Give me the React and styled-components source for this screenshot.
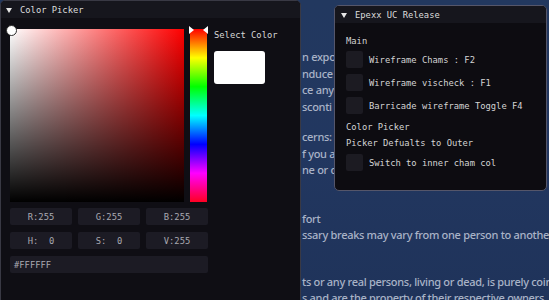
import React from "react";
import styled, { createGlobalStyle } from "styled-components";

const Global = createGlobalStyle`
  html, body { margin: 0; padding: 0; background: #21365e; }
  * { box-sizing: border-box; }
`;

const MONO = `"DejaVu Sans Mono", "Liberation Mono", monospace`;

const Desktop = styled.div`
  position: relative;
  width: 549px;
  height: 300px;
  overflow: hidden;
  background: linear-gradient(180deg, #22385f 0%, #223760 50%, #1f335a 100%);
`;

const Article = styled.div`
  padding: 49px 0 0 302px;
  font-family: "Noto Sans", "Open Sans", sans-serif;
  font-size: 11px;
  font-weight: 500;
  letter-spacing: -0.3px;
  line-height: 16.5px;
  color: #a9b3c7;
  white-space: nowrap;
`;

const Covered = styled.div`
  width: 32px;
  overflow: hidden;
  margin-bottom: ${(p) => p.$after || 0}px;
`;

const Para = styled.p`
  margin: 0 0 ${(p) => p.$after || 0}px 0;
`;

const Window = styled.div`
  position: absolute;
  left: ${(p) => p.$x}px;
  top: ${(p) => p.$y}px;
  width: ${(p) => p.$w}px;
  height: ${(p) => p.$h}px;
  border: 1px solid ${(p) => p.$border};
  border-radius: 5px;
  background: ${(p) => p.$bg};
  overflow: hidden;
  display: flex;
  flex-direction: column;
`;

const TitleBar = styled.div`
  height: 17px;
  flex: none;
  display: flex;
  align-items: center;
  gap: 8px;
  padding-left: ${(p) => p.$pad}px;
  background: #16161d;
  font-family: ${MONO};
  font-size: 8.8px;
  color: #dcdcdc;
`;

const Arrow = styled.span`
  width: 0;
  height: 0;
  border-left: 3px solid transparent;
  border-right: 3px solid transparent;
  border-top: 5px solid #e6e6e6;
  margin-top: 1px;
`;

const PickerBody = styled.div`
  padding: 11px 0 0 9px;
  display: flex;
  flex-direction: column;
`;

const PickerRow = styled.div`
  display: flex;
  align-items: flex-start;
`;

const SVSquare = styled.div`
  position: relative;
  flex: none;
  width: 174px;
  height: 173px;
  background: linear-gradient(to top, #000 0%, rgba(0, 0, 0, 0) 100%),
    linear-gradient(to right, #fff 0%, #ff0000 100%);
`;

const SVMarker = styled.div`
  position: absolute;
  left: -4px;
  top: -4px;
  width: 11px;
  height: 11px;
  border-radius: 50%;
  background: #ffffff;
  border: 1px solid #2a2a2a;
`;

const HueBar = styled.div`
  position: relative;
  flex: none;
  width: 17px;
  height: 173px;
  margin-left: 6px;
  background: linear-gradient(
    to bottom,
    #ff0000 0%,
    #ffff00 16.67%,
    #00ff00 33.33%,
    #00ffff 50%,
    #0000ff 66.67%,
    #ff00ff 83.33%,
    #ff0022 100%
  );
`;

const HueArrow = styled.span`
  position: absolute;
  top: -3px;
  ${(p) => (p.$side === "left" ? "left: -1px;" : "right: -1px;")}
  width: 0;
  height: 0;
  border-top: 4px solid transparent;
  border-bottom: 4px solid transparent;
  ${(p) =>
    p.$side === "left"
      ? "border-left: 5px solid #ffffff;"
      : "border-right: 5px solid #ffffff;"}
`;

const SideCol = styled.div`
  display: flex;
  flex-direction: column;
  margin-left: 7px;
  gap: 11px;
`;

const Label = styled.span`
  font-family: ${MONO};
  font-size: 8.8px;
  line-height: 10px;
  margin-top: 1px;
  color: #d6d6d6;
  white-space: pre;
`;

const Swatch = styled.div`
  width: 51px;
  height: 33px;
  border-radius: 3px;
  background: ${(p) => p.$color};
`;

const FieldGrid = styled.div`
  display: grid;
  grid-template-columns: repeat(3, 1fr);
  gap: 7px 6px;
  margin-top: 6px;
  width: 198px;
`;

const Field = styled.div`
  height: 17px;
  border-radius: 2px;
  background: #1c1b24;
  display: flex;
  align-items: center;
  justify-content: ${(p) => (p.$left ? "flex-start" : "center")};
  padding-left: ${(p) => (p.$left ? 4 : 0)}px;
  grid-column: ${(p) => (p.$wide ? "1 / -1" : "auto")};
  font-family: ${MONO};
  font-size: 8.8px;
  color: #a9a9b1;
  white-space: pre;
`;

const MenuBody = styled.div`
  padding: 11px 0 0 11px;
  display: flex;
  flex-direction: column;
`;

const TextLine = styled.div`
  height: 13px;
  display: flex;
  align-items: center;
  margin-top: ${(p) => p.$top || 0}px;
  font-family: ${MONO};
  font-size: 8.8px;
  color: #d4d4d4;
  white-space: pre;
`;

const CheckRow = styled.div`
  display: flex;
  align-items: center;
  gap: 6px;
  margin-top: ${(p) => p.$top || 0}px;
  font-family: ${MONO};
  font-size: 8.8px;
  color: #d4d4d4;
  white-space: pre;
`;

const Box = styled.span`
  width: 17px;
  height: 17px;
  border-radius: 2px;
  background: #1c1b22;
`;

const fields = ["R:255", "G:255", "B:255", "H:  0", "S:  0", "V:255"];

export default function App() {
  return (
    <>
      <Global />
      <Desktop>
        <Article>
          <Covered $after={14}>
            <Para>n exposure</Para>
            <Para>nduce</Para>
            <Para>ce any</Para>
            <Para>sconti</Para>
          </Covered>
          <Covered $after={32}>
            <Para>cerns:</Para>
            <Para>f you are</Para>
            <Para>ne or consult</Para>
          </Covered>
          <Para>fort</Para>
          <Para $after={30}>ssary breaks may vary from one person to another.</Para>
          <Para>ts or any real persons, living or dead, is purely coincidental.</Para>
          <Para>s and are the property of their respective owners.</Para>
        </Article>

        <Window $x={0} $y={0} $w={301} $h={312} $border="#393944" $bg="#0f0e14">
          <TitleBar $pad={5}>
            <Arrow />
            Color Picker
          </TitleBar>
          <PickerBody>
            <PickerRow>
              <SVSquare>
                <SVMarker />
              </SVSquare>
              <HueBar>
                <HueArrow $side="left" />
                <HueArrow $side="right" />
              </HueBar>
              <SideCol>
                <Label>Select Color</Label>
                <Swatch $color="#ffffff" />
              </SideCol>
            </PickerRow>
            <FieldGrid>
              {fields.map((f) => (
                <Field key={f}>{f}</Field>
              ))}
              <Field $wide $left>
                #FFFFFF
              </Field>
            </FieldGrid>
          </PickerBody>
        </Window>

        <Window $x={334} $y={5} $w={213} $h={186} $border="#55566a" $bg="#0d0c11">
          <TitleBar $pad={6}>
            <Arrow />
            Epexx UC Release
          </TitleBar>
          <MenuBody>
            <TextLine>Main</TextLine>
            <CheckRow $top={4}>
              <Box />
              Wireframe Chams : F2
            </CheckRow>
            <CheckRow $top={6}>
              <Box />
              Wireframe vischeck : F1
            </CheckRow>
            <CheckRow $top={6}>
              <Box />
              Barricade wireframe Toggle F4
            </CheckRow>
            <TextLine $top={6}>Color Picker</TextLine>
            <TextLine $top={3}>Picker Defualts to Outer</TextLine>
            <CheckRow $top={5}>
              <Box />
              Switch to inner cham col
            </CheckRow>
          </MenuBody>
        </Window>
      </Desktop>
    </>
  );
}
